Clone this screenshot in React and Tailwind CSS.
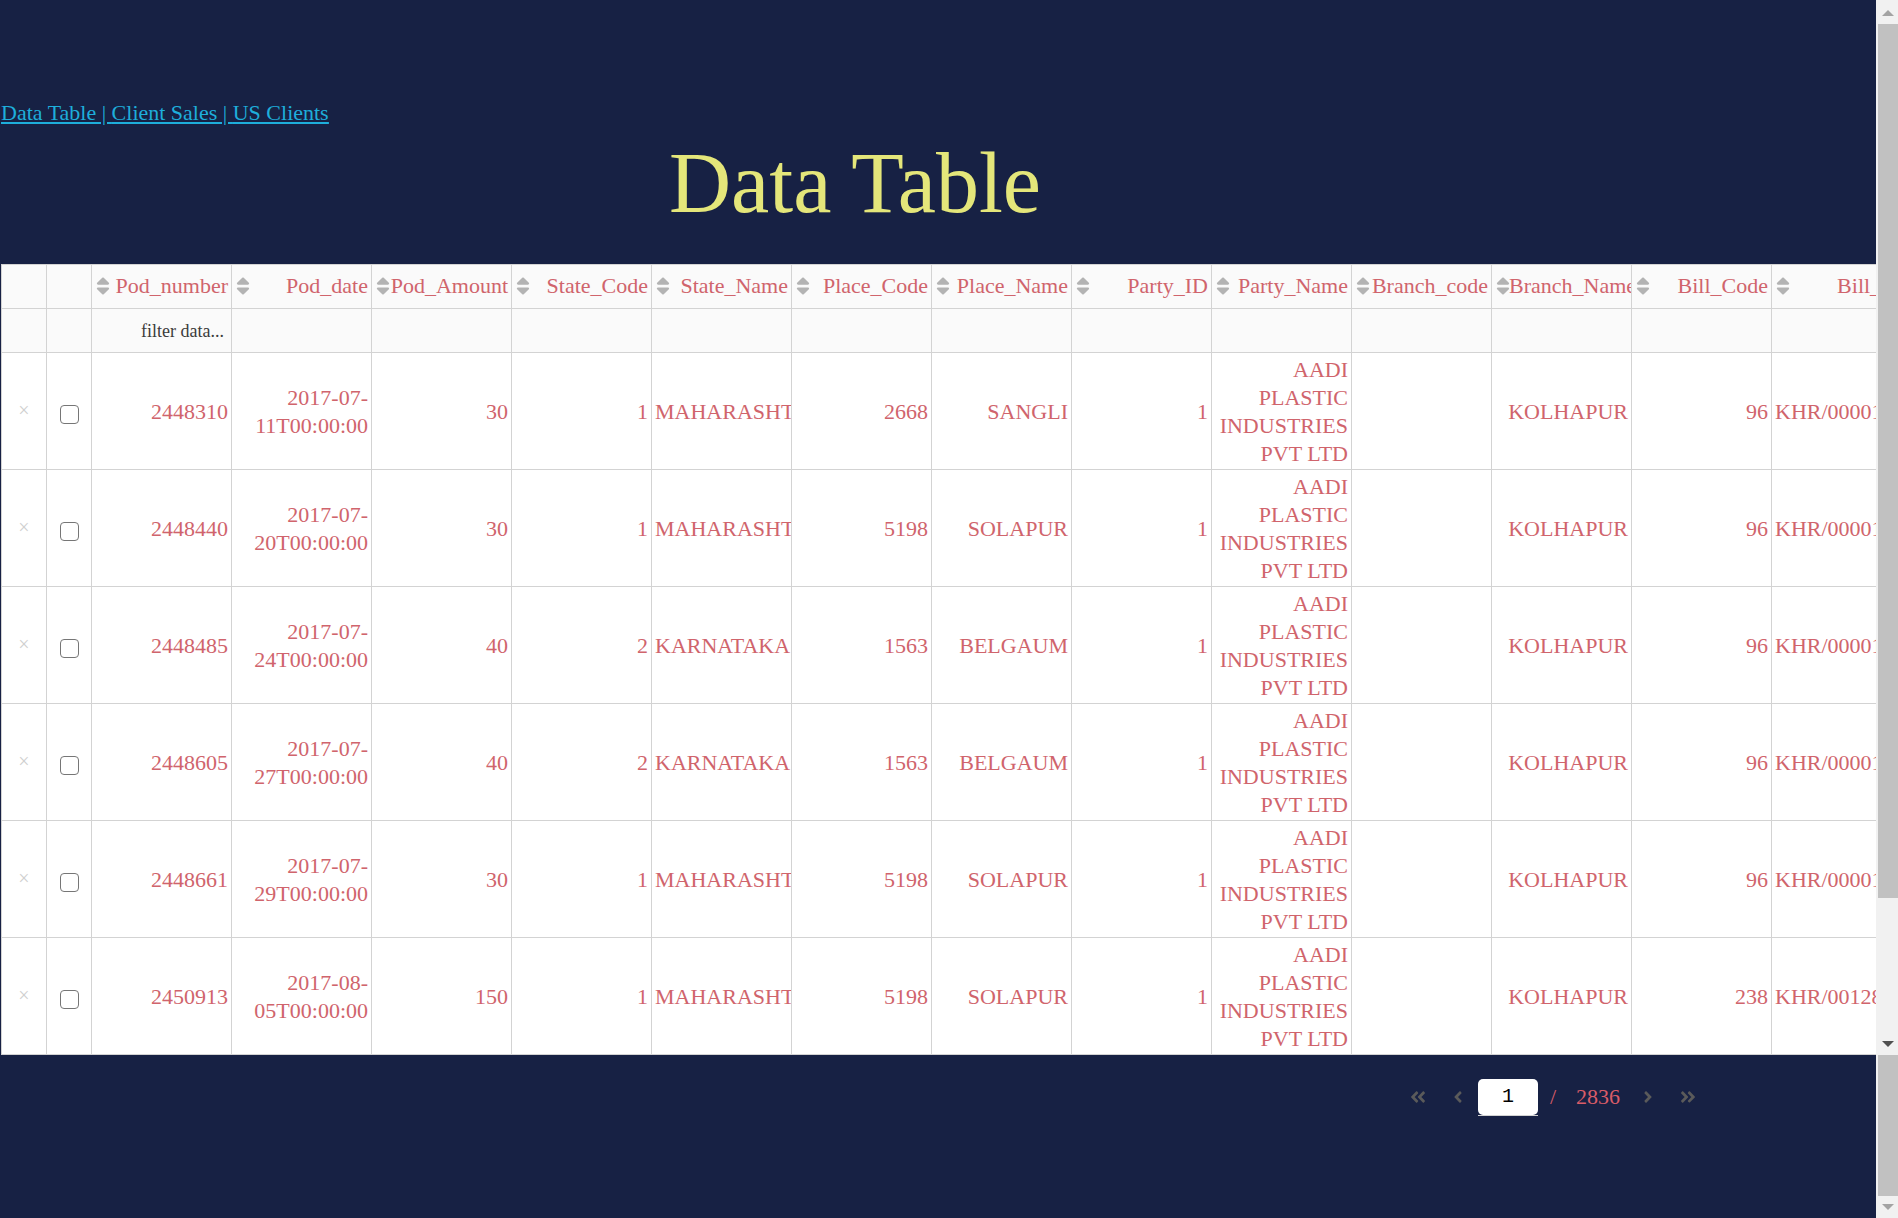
import React from "react";
import { FaSort, FaAngleDoubleLeft, FaAngleLeft, FaAngleRight, FaAngleDoubleRight } from "react-icons/fa";

const columns = [
  "Pod_number", "Pod_date", "Pod_Amount", "State_Code", "State_Name", "Place_Code", "Place_Name",
  "Party_ID", "Party_Name", "Branch_code", "Branch_Name", "Bill_Code", "Bill_No",
];

const party = "AADI PLASTIC INDUSTRIES PVT LTD";

const rows = [
  ["2448310", "2017-07-11T00:00:00", "30", "1", "MAHARASHTRA", "2668", "SANGLI", "1", party, "", "KOLHAPUR", "96", "KHR/00001"],
  ["2448440", "2017-07-20T00:00:00", "30", "1", "MAHARASHTRA", "5198", "SOLAPUR", "1", party, "", "KOLHAPUR", "96", "KHR/00001"],
  ["2448485", "2017-07-24T00:00:00", "40", "2", "KARNATAKA", "1563", "BELGAUM", "1", party, "", "KOLHAPUR", "96", "KHR/00001"],
  ["2448605", "2017-07-27T00:00:00", "40", "2", "KARNATAKA", "1563", "BELGAUM", "1", party, "", "KOLHAPUR", "96", "KHR/00001"],
  ["2448661", "2017-07-29T00:00:00", "30", "1", "MAHARASHTRA", "5198", "SOLAPUR", "1", party, "", "KOLHAPUR", "96", "KHR/00001"],
  ["2450913", "2017-08-05T00:00:00", "150", "1", "MAHARASHTRA", "5198", "SOLAPUR", "1", party, "", "KOLHAPUR", "238", "KHR/00128"],
];

const line = "border border-[#d3d3d3]";

function Nav() {
  return (
    <nav className="flex pl-px text-[22px] leading-7 whitespace-pre text-[#1eaedb] underline">
      <a href="#data-table">Data Table | </a>
      <a href="#client-sales">Client Sales | </a>
      <a href="#us-clients">US Clients</a>
    </nav>
  );
}

function DataTable() {
  return (
    <div className="overflow-hidden pl-px">
      <table className="w-[1911px] table-fixed border-collapse bg-white text-[22px] leading-7 text-[#d0646c]">
        <colgroup>
          <col className="w-[45px]" />
          <col className="w-[45px]" />
          {columns.map((name) => (
            <col key={name} className="w-[140px]" />
          ))}
        </colgroup>
        <thead className="bg-[#fafafa]">
          <tr className="h-11">
            <td className={line} />
            <td className={line} />
            {columns.map((name) => (
              <th key={name} scope="col" className={`${line} overflow-hidden pr-[3px] pb-0.5 font-normal`}>
                <div className="flex items-center justify-between whitespace-nowrap">
                  <button type="button" aria-label={`Sort by ${name}`} className="w-[17px] shrink-0 text-[#b3b3b3]">
                    <FaSort className="h-[22px]" />
                  </button>
                  <span>{name}</span>
                </div>
              </th>
            ))}
          </tr>
          <tr className="h-11">
            <td className={line} />
            <td className={line} />
            {columns.map((name, i) => (
              <td key={name} className={`${line} px-[7px]`}>
                <input
                  type="text"
                  aria-label={`Filter ${name}`}
                  placeholder={i === 0 ? "filter data..." : ""}
                  className="block w-full bg-transparent text-right text-[18px] leading-7 text-[#3c3c3c] outline-none placeholder:text-[#3c3c3c]"
                />
              </td>
            ))}
          </tr>
        </thead>
        <tbody>
          {rows.map((row) => (
            <tr key={row[0]} className="h-[117px]">
              <td className={`${line} pb-0.5 text-center`}>
                <button type="button" aria-label={`Delete row ${row[0]}`} className="text-[20px] leading-7 text-[#cfcfcf]">
                  ×
                </button>
              </td>
              <td className={line}>
                <input
                  type="checkbox"
                  aria-label={`Select row ${row[0]}`}
                  className="mx-auto mt-1.5 block size-[19px] appearance-none rounded-[4px] border border-[#767676] bg-white"
                />
              </td>
              {row.map((value, i) => (
                <td
                  key={columns[i]}
                  className={`${line} overflow-hidden px-[3px] pt-[3px] pb-px ${i === 4 || i === 12 ? "text-left" : "text-right"} ${i === 4 ? "pr-0" : ""}`}
                >
                  {value}
                </td>
              ))}
            </tr>
          ))}
        </tbody>
      </table>
    </div>
  );
}

function Pager() {
  const button = "flex w-10 items-center justify-center text-[#5a5a5a]";
  return (
    <div className="flex h-9 items-stretch justify-end text-[22px] leading-9 text-[#d95c68]">
      <button type="button" aria-label="First page" className={button}><FaAngleDoubleLeft className="size-[18px]" /></button>
      <button type="button" aria-label="Previous page" className={button}><FaAngleLeft className="size-[18px]" /></button>
      <div className="h-[37px] border-b border-[#d3d3d3]">
        <input
          type="text"
          aria-label="Current page"
          defaultValue="1"
          className="block h-9 w-[60px] rounded-[5px] bg-white text-center font-['Liberation_Mono',monospace] text-[20px] text-black"
        />
      </div>
      <span className="w-[30px] text-center">/</span>
      <span className="px-2">2836</span>
      <button type="button" aria-label="Next page" className={button}><FaAngleRight className="size-[18px]" /></button>
      <button type="button" aria-label="Last page" className={button}><FaAngleDoubleRight className="size-[18px]" /></button>
    </div>
  );
}

function Arrow({ className, up }) {
  return (
    <svg viewBox="0 0 12 6" className={`ml-1 h-1.5 w-3 ${className}`} fill="currentColor" aria-hidden="true">
      <path d={up ? "M0 6L6 0L12 6Z" : "M0 0H12L6 6Z"} />
    </svg>
  );
}

function ScrollBars() {
  return (
    <div className="flex w-[22px] shrink-0 flex-col bg-[#f1f1f1] pl-0.5" aria-hidden="true">
      <div className="flex flex-1 flex-col">
        <Arrow up className="mt-2.5 mb-2 text-[#a3a3a3]" />
        <div className="flex-1 bg-[#c1c1c1]" />
        <Arrow className="mt-[143px] mb-2 text-[#505050]" />
      </div>
      <div className="flex h-[163px] flex-col">
        <div className="flex-1 bg-[#c1c1c1]" />
        <Arrow className="my-2 text-[#a3a3a3]" />
      </div>
    </div>
  );
}

export default function App() {
  return (
    <div className="flex min-h-screen bg-[#172144] font-['Liberation_Serif',serif]">
      <main className="min-w-0 flex-1 overflow-hidden pt-[99px]">
        <Nav />
        <h1 className="mr-[166px] pt-1 text-center text-[86px] leading-[105px] text-[#e4e67a]">Data Table</h1>
        <div className="pt-7">
          <DataTable />
        </div>
        <div className="mr-[168px] pt-6">
          <Pager />
        </div>
      </main>
      <ScrollBars />
    </div>
  );
}
